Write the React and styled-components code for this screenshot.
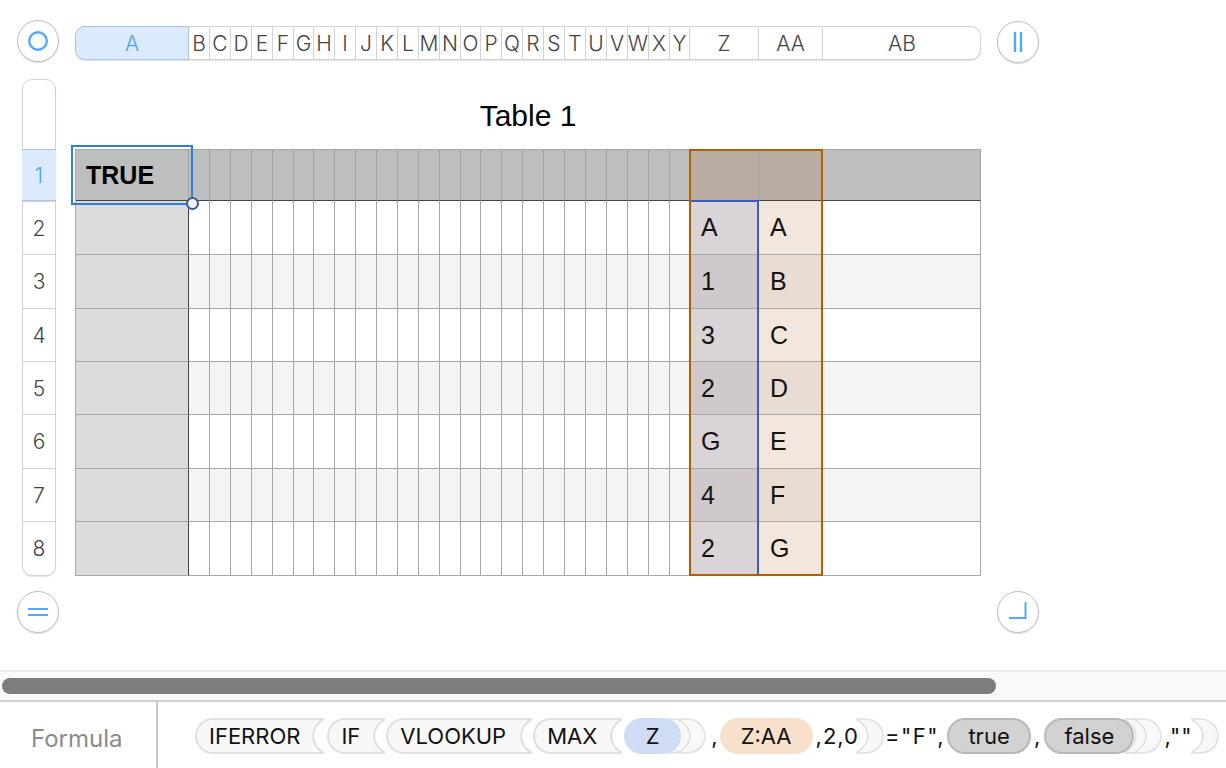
import React from 'react';
import styled, { createGlobalStyle, css } from 'styled-components';

const GlobalStyle = createGlobalStyle`
  html, body {
    margin: 0;
    background: #fff;
    overflow: hidden;
  }
`;

const SANS = '"Liberation Sans", Arial, sans-serif';
const UI = 'Inter, "Noto Sans", sans-serif';
const BLUE = '#54aaf8';

// column widths, same for the header bar and the table
const columns = [
  ['A', 113], ['B', 21], ['C', 21], ['D', 21], ['E', 21], ['F', 21], ['G', 20],
  ['H', 21], ['I', 21], ['J', 21], ['K', 21], ['L', 21], ['M', 21], ['N', 21],
  ['O', 20], ['P', 21], ['Q', 21], ['R', 21], ['S', 21], ['T', 21], ['U', 21],
  ['V', 21], ['W', 21], ['X', 21], ['Y', 20], ['Z', 69], ['AA', 64], ['AB', 158],
];
const rowHeights = [51, 54, 54, 53, 53, 54, 53, 54];
const template = columns.map(([, w]) => `${w}px`).join(' ');

const zValues = ['A', '1', '3', '2', 'G', '4', '2'];
const aaValues = ['A', 'B', 'C', 'D', 'E', 'F', 'G'];

const Page = styled.div`
  width: 1226px;
  height: 768px;
  display: flex;
  flex-direction: column;
  background: #fff;
`;

const Canvas = styled.div`
  height: 670px;
  box-sizing: border-box;
  padding: 21px 0 0 17px;
  display: grid;
  grid-template-columns: 42px 16px 907px 15px 42px;
  grid-template-rows: 42px auto 42px;
  align-content: start;
`;

const RoundButton = styled.div`
  grid-column: ${({ $col }) => $col};
  width: 42px;
  height: 42px;
  box-sizing: border-box;
  border-radius: 50%;
  border: 1px solid #bdbdbd;
  box-shadow: 0 1px 1px rgba(0, 0, 0, 0.15);
  display: flex;
  align-items: center;
  justify-content: center;
  margin-top: ${({ $top }) => $top || 0}px;
`;

const ColumnBar = styled.div`
  grid-column: 3;
  align-self: start;
  margin: 5px 0 0 0;
  width: 906px;
  height: 34px;
  box-sizing: border-box;
  padding-left: 1px;
  display: grid;
  grid-template-columns: ${template};
  border: 1px solid #d2d2d2;
  border-left: 0;
  border-radius: 10px;
  box-shadow: 0 1px 1px rgba(0, 0, 0, 0.12);
`;

const ColumnHead = styled.div`
  box-sizing: border-box;
  display: flex;
  align-items: center;
  justify-content: center;
  font: 300 21px ${UI};
  color: #444;
  border-right: 1px solid #d2d2d2;
  &:last-child {
    border-right: 0;
  }
  ${({ $active }) =>
    $active &&
    css`
      background: #dbeafc;
      color: #4da3f0;
      margin: -1px 0 -1px -1px;
      border: 1px solid #a9c6e6;
      border-radius: 10px 0 0 10px;
    `}
`;

const RowGutter = styled.div`
  grid-column: 1;
  justify-self: end;
  margin: 16px 3px 0 0;
  width: 34px;
  height: 497px;
  box-sizing: border-box;
  border: 1px solid #d2d2d2;
  border-radius: 10px;
  box-shadow: 0 1px 1px rgba(0, 0, 0, 0.12);
  display: flex;
  flex-direction: column;
`;

const GutterBlank = styled.div`
  height: 69px;
`;

const RowHead = styled.div`
  height: ${({ $h }) => $h}px;
  box-sizing: border-box;
  border-top: 1px solid #d2d2d2;
  display: flex;
  align-items: center;
  justify-content: center;
  font: 300 21px ${UI};
  color: #444;
  ${({ $active }) =>
    $active &&
    css`
      background: #dbeafc;
      color: #4da3f0;
      margin: 0 -1px;
      border-top: 1px solid #a9c6e6;
      border-bottom: 1px solid #a9c6e6;
    `}
`;

const SheetArea = styled.div`
  grid-column: 3;
  margin-top: 16px;
  display: flex;
  flex-direction: column;
`;

const Title = styled.div`
  height: 70px;
  box-sizing: border-box;
  padding-top: 20px;
  width: 906px;
  text-align: center;
  font: 30px ${SANS};
  color: #000;
`;

const SheetWrap = styled.div`
  position: relative;
`;

const Sheet = styled.div`
  width: 906px;
  box-sizing: border-box;
  border-left: 1px solid #a8a8a8;
  border-top: 1px solid #a8a8a8;
  display: grid;
  grid-template-columns: ${template};
  grid-template-rows: ${rowHeights.map((h) => `${h}px`).join(' ')};
`;

const cellBackground = ({ $col, $row }) => {
  const alt = $row % 2 === 0;
  if ($row === 0) {
    return $col === 25 || $col === 26 ? '#baaea2' : '#bdbfbe';
  }
  if ($col === 0) return '#dcdcdc';
  if ($col === 25) return alt ? '#cfc9ce' : '#d9d4d8';
  if ($col === 26) return alt ? '#e9dcd2' : '#f3e6dc';
  return alt ? '#f4f4f4' : '#fff';
};

const Cell = styled.div`
  box-sizing: border-box;
  background: ${cellBackground};
  border-right: 1px solid ${({ $col, $row }) =>
    $col === 0 && $row > 0 ? '#444' : $row === 0 ? '#a3a5a4' : '#a8a8a8'};
  border-bottom: 1px solid ${({ $row }) => ($row === 0 ? '#444' : '#a8a8a8')};
  display: flex;
  align-items: center;
  padding-left: ${({ $bold }) => ($bold ? 10 : 11)}px;
  font: ${({ $bold }) => ($bold ? 'bold' : 'normal')} 25px ${SANS};
  color: ${({ $bold }) => ($bold ? '#000' : '#17120f')};
`;

// selection and reference rings lie on top of the grid
const Ring = styled.div`
  position: absolute;
  box-sizing: border-box;
  left: ${({ $x }) => $x}px;
  top: ${({ $y }) => $y}px;
  width: ${({ $w }) => $w}px;
  height: ${({ $h }) => $h}px;
  border: 2px solid ${({ $color }) => $color};
`;

const Handle = styled.div`
  position: absolute;
  left: 111px;
  top: 48px;
  width: 13px;
  height: 13px;
  box-sizing: border-box;
  border-radius: 50%;
  border: 2px solid #3c5a9c;
  background: #f2f4f8;
`;

const ScrollTrack = styled.div`
  height: 30px;
  box-sizing: border-box;
  background: #fafafa;
  border-top: 2px solid #eeeeee;
  padding: 6px 0 0 2px;
`;

const ScrollThumb = styled.div`
  width: 994px;
  height: 16px;
  border-radius: 8px;
  background: #7d7d7d;
`;

const FormulaBar = styled.div`
  flex: 1;
  display: flex;
  border-top: 2px solid #cfcfcf;
`;

const FormulaLabel = styled.div`
  width: 158px;
  box-sizing: border-box;
  border-right: 2px solid #c8c8c8;
  padding: 6px 0 0 31px;
  font: 24px ${UI};
  color: #8c8c8c;
  display: flex;
  align-items: center;
`;

const Tokens = styled.div`
  display: flex;
  align-items: center;
  padding: 0 0 0 37px;
  height: 36px;
  margin-top: 16px;
  font: 22px ${UI};
  color: #111;
  white-space: nowrap;
`;

const FuncBody = styled.div`
  height: 36px;
  box-sizing: border-box;
  background: #f8f8f8;
  border: 2px solid #e0e0e0;
  border-right: 0;
  border-radius: 18px 0 0 18px;
  padding: 0 ${({ $pr }) => $pr}px 0 12px;
  display: flex;
  align-items: center;
`;

const Func = styled.div`
  display: flex;
  margin-left: ${({ $ml }) => $ml || 0}px;
`;

const Pill = styled.div`
  position: relative;
  z-index: 1;
  height: 36px;
  width: ${({ $w }) => $w}px;
  box-sizing: border-box;
  border-radius: 18px;
  margin-left: ${({ $ml }) => $ml || 0}px;
  background: ${({ $bg }) => $bg};
  border: ${({ $line }) => ($line ? `2px solid ${$line}` : '0')};
  display: flex;
  align-items: center;
  justify-content: center;
`;

const Plain = styled.span`
  margin-left: ${({ $ml }) => $ml || 0}px;
  letter-spacing: ${({ $ls }) => $ls || 0}px;
`;

const Cap = styled.svg`
  display: block;
  flex: none;
  margin-left: ${({ $ml }) => $ml || 0}px;
`;

const OpenCap = () => (
  <Cap width="12" height="36" viewBox="0 0 12 36">
    <path d="M0 1H12C4 6 1 12 1 18C1 24 4 30 12 35H0Z" fill="#f8f8f8" />
    <path d="M0 1H12C4 6 1 12 1 18C1 24 4 30 12 35H0" fill="none" stroke="#e0e0e0" strokeWidth="2" />
  </Cap>
);

const CloseCap = ({ ml }) => (
  <Cap $ml={ml} width="28" height="36" viewBox="0 0 28 36">
    <path
      d="M0 1H8C20 1 27 9 27 18C27 27 20 35 8 35H0C8 30 12 25 12 18C12 11 8 6 0 1Z"
      fill="#f8f8f8"
      stroke="#e0e0e0"
      strokeWidth="1.5"
    />
  </Cap>
);

const FuncToken = ({ name, pr, ml }) => (
  <Func $ml={ml}>
    <FuncBody $pr={pr}>{name}</FuncBody>
    <OpenCap />
  </Func>
);

const Icon = ({ children }) => (
  <svg width="24" height="24" viewBox="0 0 24 24" fill="none" stroke={BLUE} strokeWidth="2">
    {children}
  </svg>
);

const App = () => (
  <Page>
    <GlobalStyle />
    <Canvas>
      <RoundButton $col={1} $top={-1}>
        <Icon>
          <circle cx="12" cy="12" r="8.8" strokeWidth="2.4" />
        </Icon>
      </RoundButton>
      <ColumnBar>
        {columns.map(([name], i) => (
          <ColumnHead key={name} $active={i === 0}>
            {name}
          </ColumnHead>
        ))}
      </ColumnBar>
      <RoundButton $col={5}>
        <Icon>
          <path d="M9 2V22M15 2V22" strokeWidth="2.4" />
        </Icon>
      </RoundButton>

      <RowGutter>
        <GutterBlank />
        {rowHeights.map((h, i) => (
          <RowHead key={i} $h={i === 0 ? 52 : i === 1 ? 53 : h} $active={i === 0}>
            {i + 1}
          </RowHead>
        ))}
      </RowGutter>
      <SheetArea>
        <Title>Table 1</Title>
        <SheetWrap>
          <Sheet>
            {rowHeights.map((_, row) =>
              columns.map(([name], col) => (
                <Cell key={name + row} $col={col} $row={row} $bold={row === 0 && col === 0}>
                  {row === 0 && col === 0 && 'TRUE'}
                  {row > 0 && col === 25 && zValues[row - 1]}
                  {row > 0 && col === 26 && aaValues[row - 1]}
                </Cell>
              ))
            )}
          </Sheet>
          <Ring $x={-4} $y={-4} $w={122} $h={60} $color="#2f7ed8" />
          <Handle />
          <Ring $x={614} $y={51} $w={70} $h={376} $color="#3a5cc0" />
          <Ring $x={614} $y={0} $w={134} $h={427} $color="#b85c00" />
        </SheetWrap>
      </SheetArea>

      <RoundButton $col={1} $top={15}>
        <Icon>
          <path d="M2 9H22M2 15H22" />
        </Icon>
      </RoundButton>
      <RoundButton $col={5} $top={15}>
        <Icon>
          <path d="M3 18H19.5V2" />
        </Icon>
      </RoundButton>
    </Canvas>

    <ScrollTrack>
      <ScrollThumb />
    </ScrollTrack>

    <FormulaBar>
      <FormulaLabel>Formula</FormulaLabel>
      <Tokens>
        <FuncToken name="IFERROR" pr={12} />
        <FuncToken name="IF" pr={13} ml={3} />
        <FuncToken name="VLOOKUP" pr={14} ml={1} />
        <FuncToken name="MAX" pr={13} ml={1} />
        <Pill $w={57} $bg="#cfdcf4" $ml={2}>Z</Pill>
        <CloseCap ml={-17} />
        <CloseCap ml={-14} />
        <Plain $ml={5}>,</Plain>
        <Pill $w={93} $bg="#f8e1cc" $ml={2}>Z:AA</Pill>
        <Plain $ml={3} $ls={1}>,2,0</Plain>
        <CloseCap ml={-3} />
        <Plain $ml={1} $ls={1.5}>="F",</Plain>
        <Pill $w={84} $bg="#d2d2d2" $line="#b8b8b8" $ml={2}>true</Pill>
        <Plain $ml={3}>,</Plain>
        <Pill $w={90} $bg="#d2d2d2" $line="#b8b8b8" $ml={4}>false</Pill>
        <CloseCap ml={-10} />
        <CloseCap ml={-18} />
        <Plain $ml={2} $ls={1}>,""</Plain>
        <CloseCap ml={-1} />
      </Tokens>
    </FormulaBar>
  </Page>
);

export default App;
